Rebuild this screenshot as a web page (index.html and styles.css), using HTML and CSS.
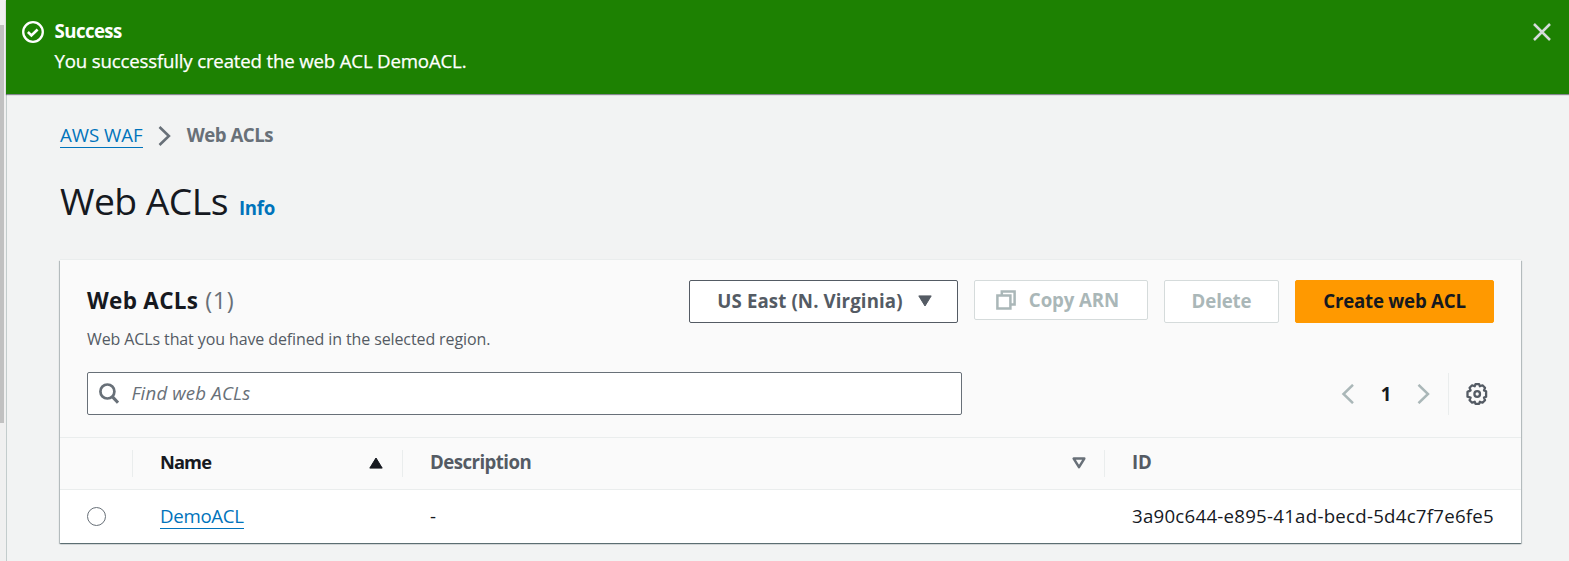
FILE: index.html
```
<!DOCTYPE html>
<html lang="en">
<head>
<meta charset="utf-8">
<title>Web ACLs</title>
<link rel="stylesheet" href="styles.css">
</head>
<body>
<div class="rail"><div class="rail-thumb"></div></div>
<div class="app">
  <div class="flash">
    <svg class="flash-icon" viewBox="0 0 22 22" fill="none" stroke="#fff" stroke-width="2.3"><circle cx="11" cy="11" r="9.8"/><path d="M5.9 11l3.5 3.5 6.2-6" stroke-width="2.6"/></svg>
    <div class="flash-body">
      <div class="flash-title">Success</div>
      <div class="flash-text">You successfully created the web ACL DemoACL.</div>
    </div>
    <svg class="flash-close" viewBox="0 0 18 18" fill="none" stroke="#d5dbdb" stroke-width="2.5"><path d="M1 1l16 16M17 1L1 17"/></svg>
  </div>
  <main class="page">
    <nav class="crumbs">
      <a class="link crumb-link" href="#">AWS WAF</a>
      <svg class="crumb-sep" viewBox="0 0 13 20" fill="none" stroke="#687078" stroke-width="2.6"><path d="M1.5 1l9.4 9-9.4 9"/></svg>
      <span class="crumb-current">Web ACLs</span>
    </nav>
    <div class="title-row"><h1 class="title">Web ACLs</h1><a class="info" href="#">Info</a></div>
    <section class="card">
      <header class="card-head">
        <div class="head-top">
          <div>
            <h2 class="card-title">Web ACLs<span class="count">(1)</span></h2>
            <p class="card-desc">Web ACLs that you have defined in the selected region.</p>
          </div>
          <div class="actions">
            <button class="btn btn-region"><span>US East (N. Virginia)</span><svg width="14" height="12" viewBox="0 0 14 12" fill="#545b64" stroke="#545b64" stroke-linejoin="round"><path d="M.8.9h12.4L7 11z"/></svg></button>
            <button class="btn btn-copy"><svg width="20" height="20" viewBox="0 0 20 20" fill="none" stroke="#aab7b8" stroke-width="2.5"><path d="M1.4 5.6h13v13h-13zM5.8 5.6V1.4h12.8v13h-4.2"/></svg><span>Copy ARN</span></button>
            <button class="btn btn-delete">Delete</button>
            <button class="btn btn-create">Create web ACL</button>
          </div>
        </div>
        <div class="tools">
          <div class="search">
            <svg width="20" height="21" viewBox="0 0 20 21" fill="none" stroke="#687078" stroke-width="2.7"><circle cx="8.4" cy="8.5" r="7"/><path d="M13.3 13.6l5.7 6" stroke-width="3"/></svg>
            <span class="placeholder">Find web ACLs</span>
          </div>
          <div class="pager">
            <svg width="13" height="20" viewBox="0 0 13 20" fill="none" stroke="#aab7b8" stroke-width="2.5"><path d="M12 .8L2.5 10l9.5 9.2"/></svg>
            <span class="page-no">1</span>
            <svg width="13" height="20" viewBox="0 0 13 20" fill="none" stroke="#aab7b8" stroke-width="2.5"><path d="M1.5.8L11 10l-9.5 9.2"/></svg>
            <span class="divider"></span>
            <svg width="22" height="22" viewBox="0 0 22 22" fill="none" stroke="#545b64" stroke-width="2.3" stroke-linejoin="round"><path d="M9.2 1.2h3.6l.8 2.1 2.6-1 2.5 2.5-1 2.6 2.1.9v5.4l-2.1.9 1 2.6-2.5 2.5-2.6-1-.8 2.1H9.2l-.8-2.1-2.6 1-2.5-2.5 1-2.6-3.1-.9V8.9l3.1-1.5-1-2.6 2.5-2.5 2.6 1z" transform="translate(.3 0)"/><circle cx="11.2" cy="11" r="2.8"/></svg>
          </div>
        </div>
      </header>
      <div class="row row-head">
        <div class="cell"></div>
        <div class="cell sep sorted"><span class="th th-name">Name</span><svg class="sort" width="14" height="12" viewBox="0 0 14 12" fill="#16191f" stroke="#16191f" stroke-linejoin="round"><path d="M.8 11.1h12.4L7 1z"/></svg></div>
        <div class="cell sep sep-desc"><span class="th th-desc">Description</span><svg class="sort" width="14" height="12" viewBox="0 0 14 12" fill="none" stroke="#687078" stroke-width="2.5" stroke-linejoin="round"><path d="M1.7 1.6h10.6L7 10.2z"/></svg></div>
        <div class="cell sep"><span class="th th-id">ID</span></div>
      </div>
      <div class="row row-body">
        <div class="cell"><span class="radio"></span></div>
        <div class="cell"><a class="link name-link" href="#">DemoACL</a></div>
        <div class="cell"><span class="td">-</span></div>
        <div class="cell"><span class="td td-id">3a90c644-e895-41ad-becd-5d4c7f7e6fe5</span></div>
      </div>
    </section>
  </main>
</div>
</body>
</html>
```
FILE: styles.css
```
* { box-sizing: border-box; }
body {
  margin: 0;
  height: 561px;
  overflow: hidden;
  display: flex;
  background: #f2f3f3;
  color: #16191f;
  font: 18.67px/30px "Open Sans", "Noto Sans", sans-serif;
}
h1, h2, p { margin: 0; }
a { text-decoration: none; }
svg { display: block; flex: none; }

.rail { width: 6px; flex: none; background: #f0f0f0; padding-top: 25px; }
.rail-thumb { width: 4px; height: 398px; background: #c1c1c1; }

.app { flex: 1; min-width: 0; display: flex; flex-direction: column; }

.flash {
  height: 94px;
  flex: none;
  display: flex;
  align-items: flex-start;
  padding: 16px 18px 0 16px;
  background: #1d8102;
  color: #fff;
  box-shadow: 0 1px 1px rgba(0, 7, 22, .45);
  z-index: 1;
}
.flash-icon { width: 22px; height: 22px; margin: 5px 10.5px 0 0; }
.flash-body { flex: 1; }
.flash-title { font-weight: 700; letter-spacing: -.58px; }
.flash-text { letter-spacing: -.18px; -webkit-text-stroke: .25px #fff; }
.flash-close { width: 18px; height: 18px; margin-top: 7px; }

.page {
  flex: 1;
  padding: 26px 48px 0 53px;
  border-left: 1px solid #c3cccc;
}
.crumbs { display: flex; align-items: flex-start; height: 30px; }
.link { color: #0073bb; border-bottom: 1px solid #0073bb; }
.crumb-link { line-height: 29px; height: 28px; }
.crumb-sep { width: 13px; height: 20px; margin: 6px 16px 0 15px; }
.crumb-current { font-weight: 700; letter-spacing: -.5px; color: #687078; line-height: 29px; }

.title-row { display: flex; align-items: baseline; margin-top: 26px; height: 49px; }
.title { font-size: 37.33px; line-height: 50px; font-weight: 400; letter-spacing: -.55px; }
.info { margin-left: 11px; font-weight: 700; letter-spacing: -.3px; color: #0073bb; }

.card {
  margin-top: 35px;
  background: #fff;
  box-shadow: 0 -1px 0 #eaeded, 0 1px 1px rgba(0, 28, 36, .4), 1px 1px 1px rgba(0, 28, 36, .2), -1px 1px 1px rgba(0, 28, 36, .2);
}
.card-head {
  height: 177px;
  padding: 19px 27px 0;
  background: #fafafa;
}
.head-top { display: flex; justify-content: space-between; height: 93px; }
.card-title { padding-top: 1px; font-size: 22.5px; line-height: 40px; font-weight: 700; letter-spacing: .3px; }
.count { margin-left: 7px; font-size: 23.5px; font-weight: 400; color: #687078; letter-spacing: .5px; }
.card-desc { margin-top: 3px; font-size: 16px; line-height: 30px; letter-spacing: -.11px; color: #545b64; }

.actions { display: flex; align-items: flex-start; gap: 16px; padding-top: 1px; }
.btn {
  display: flex;
  align-items: center;
  justify-content: center;
  height: 43px;
  padding: 0 0 1px;
  border: 1px solid #d5dbdb;
  border-radius: 2px;
  background: #fff;
  color: #aab7b8;
  font: inherit;
  font-weight: 700;
  white-space: nowrap;
}
.btn-region { width: 269px; gap: 15px; padding-left: 2px; border-color: #545b64; color: #545b64; letter-spacing: .12px; }
.btn-copy { width: 174px; height: 40px; gap: 13px; padding-right: 7px; letter-spacing: -.1px; }
.btn-delete { width: 115px; letter-spacing: -.15px; }
.btn-create { width: 199px; border-color: #ff9900; background: #ff9900; color: #16191f; letter-spacing: -.22px; }

.tools { display: flex; justify-content: space-between; align-items: flex-start; }
.search {
  display: flex;
  align-items: center;
  width: 875px;
  height: 43px;
  padding-left: 11px;
  border: 1px solid #687078;
  border-radius: 2px;
  background: #fff;
}
.placeholder { margin: 0 0 2px 12.5px; font-style: italic; letter-spacing: .17px; color: #687078; }
.pager { display: flex; align-items: center; height: 43px; padding-right: 6px; }
.page-no { width: 63px; padding-left: 1px; text-align: center; font-weight: 700; }
.divider { width: 1px; height: 42px; margin: 0 17px 0 18px; background: #eaeded; }

.row { display: grid; grid-template-columns: 72px 270px 702px 1fr; align-items: center; }
.row-head {
  height: 53px;
  background: #fafafa;
  border-top: 1px solid #eaeded;
  border-bottom: 1px solid #eaeded;
  font-weight: 700;
  color: #545b64;
}
.row-body { height: 53px; }
.cell { display: flex; align-items: center; justify-content: space-between; padding: 0 19px 0 28px; }
.cell:first-child { padding-left: 27px; }
.row-head .cell { height: 27px; border-left: 1px solid transparent; }
.row-head .sep { border-left-color: #eaeded; padding-left: 27px; }
.row-head .sep-desc { padding-right: 18px; }
.sorted { color: #16191f; }
.sort { margin-bottom: 2px; }
.th { margin-bottom: 3px; }
.th-name { font-size: 18.3px; letter-spacing: -.9px; }
.th-desc { letter-spacing: -.55px; }
.th-id { letter-spacing: -.3px; }
.td { margin-bottom: 2px; }
.td-id { letter-spacing: .25px; white-space: nowrap; }
.radio { width: 19px; height: 19px; border: 1.5px solid #687078; border-radius: 50%; }
.name-link { letter-spacing: -.3px; height: 27px; line-height: 28px; margin-bottom: 2px; }
```
